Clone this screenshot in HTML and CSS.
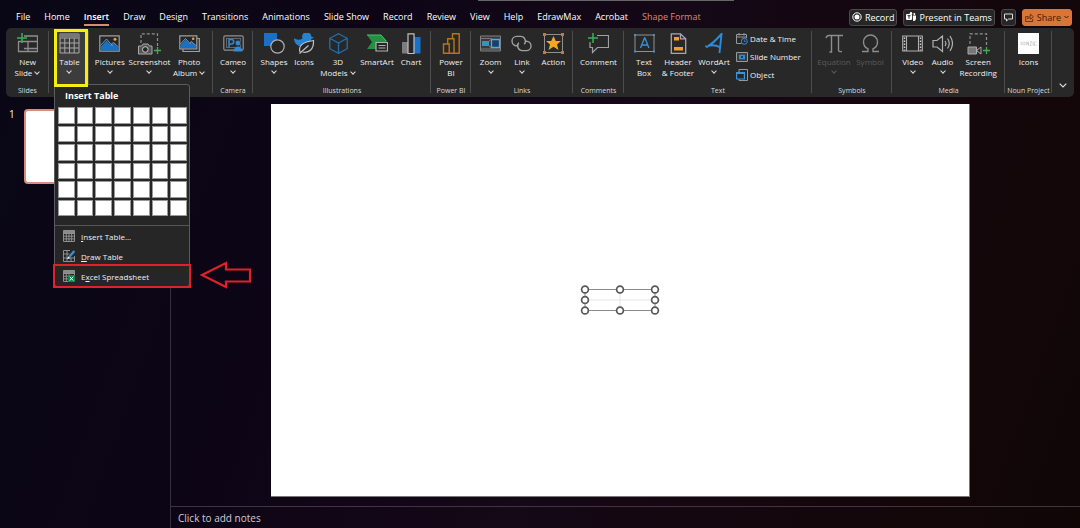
FILE: index.html
```html
<!DOCTYPE html>
<html lang="en">
<head>
  <meta charset="UTF-8">
  <meta name="viewport" content="width=device-width, initial-scale=1.0">
  <title>Presentation - Insert Table</title>
  <link rel="stylesheet" href="styles.css">
</head>
<body>
  <header class="topbar">
    <nav class="tabs">
      <a href="#">File</a>
      <a href="#">Home</a>
      <a href="#" class="active">Insert</a>
      <a href="#">Draw</a>
      <a href="#">Design</a>
      <a href="#">Transitions</a>
      <a href="#">Animations</a>
      <a href="#">Slide Show</a>
      <a href="#">Record</a>
      <a href="#">Review</a>
      <a href="#">View</a>
      <a href="#">Help</a>
      <a href="#">EdrawMax</a>
      <a href="#">Acrobat</a>
      <a href="#" class="context">Shape Format</a>
    </nav>
    <div class="actions">
      <button type="button">
        <svg width="10" height="10" viewBox="0 0 10 10"><circle cx="5" cy="5" r="4.2" fill="none" stroke="#fff"/><circle cx="5" cy="5" r="2.5" fill="#fff"/></svg>
        Record
      </button>
      <button type="button">
        <svg width="10" height="10" viewBox="0 0 10 10"><rect x="0" y="2" width="6" height="6" rx="1" fill="#fff"/><path d="M1.5 3.7h3M3 3.7v3" stroke="#262626" fill="none"/><circle cx="5" cy="1.2" r="1.2" fill="#fff"/><circle cx="8.3" cy="2" r="1" fill="#fff"/><path d="M6.8 3.6H10V7a2.4 2.4 0 0 1-3 1.8z" fill="#fff"/></svg>
        Present in Teams
      </button>
      <button type="button" aria-label="Comments">
        <svg width="9" height="9" viewBox="0 0 9 9"><path d="M.5 1h8v5H4.6L2.5 8V6h-2z" fill="none" stroke="#ddd"/></svg>
      </button>
      <button type="button" class="share">
        <svg width="9" height="9" viewBox="0 0 9 9"><path d="M3 3.500H.7v5h7V6M2.600 6c.2-2 1.400-2.900 3-2.900V1.200l2.800 2.600-2.800 2.400V4.700C4.200 4.700 3.300 5 2.600 6z" fill="none" stroke="#5a2408" stroke-width=".8"/></svg>
        Share
        <svg width="5" height="4" viewBox="0 0 5 4"><path d="M.5 1l2 2 2-2" fill="none" stroke="#401a06"/></svg>
      </button>
    </div>
  </header>

  <section class="ribbon">
    <div class="group">
      <div class="tools">
        <button type="button" class="tool">
          <svg viewBox="0 0 21 21"><path d="M7 3h13.500v15.500H1.500V8M1.500 8.500H20M11 8.500V18.500M7 15.500H20" fill="none" stroke="#8d8d8d" stroke-width="1.300"/><path d="M5 0v10M0 5h10" stroke="#3fae55" stroke-width="1.500"/></svg>
          <span>New<br>Slide <i class="chev"></i></span>
        </button>
      </div>
      <div class="name">Slides</div>
    </div>

    <div class="group tables">
      <div class="tools">
        <button type="button" class="tool open">
          <svg viewBox="0 0 21 21"><path d="M1 1h19v19H1zM1 5h19M1 10h19M1 15h19M5.800 5v15M10.500 5v15M15.200 5v15" fill="none" stroke="#a8a8a8"/><path d="M1 1h19v4H1z" fill="#777"/></svg>
          <span>Table<i class="chev"></i></span>
        </button>
      </div>
      <div class="menu">
        <h2>Insert Table</h2>
        <div class="cells" id="cells"></div>
        <button type="button" class="item">
          <svg viewBox="0 0 12 12"><path d="M.5.5h11v11H.5zM.5 3.500h11M.5 6.200h11M.5 8.900h11M3.300 3v8.500M6 3v8.500M8.700 3v8.500" fill="none" stroke="#9a9a9a" stroke-width=".9"/><path d="M.5.5h11v2.500H.5z" fill="#8a8a8a"/></svg>
          <span><u>I</u>nsert Table...</span>
        </button>
        <button type="button" class="item">
          <svg viewBox="0 0 12 12"><path d="M7 .5H.5v11h11V6M.5 4h6M.5 8h11M4 .5v11M8 8v3.500" fill="none" stroke="#9a9a9a" stroke-width=".9"/><path d="M11.300 1L6 7.300" stroke="#3f8fd0" stroke-width="2.200"/><path d="M5.600 6.600L4 9.300l2.800-1z" fill="#fff"/></svg>
          <span><u>D</u>raw Table</span>
        </button>
        <button type="button" class="item marked">
          <svg viewBox="0 0 12 12"><path d="M.5.5h11v11H.5zM.5 3.500h11M.5 6.200h11M.5 8.900h11M3.300 3v8.500M6 3v8.500" fill="none" stroke="#9a9a9a" stroke-width=".9"/><path d="M.5.5h11v2.500H.5z" fill="#8a8a8a"/><path d="M5 5h7v7H5z" fill="#16874a"/><path d="M6.800 6.700l3.400 3.800M10.200 6.700l-3.400 3.800" stroke="#fff"/></svg>
          <span>E<u>x</u>cel Spreadsheet</span>
        </button>
        <svg class="arrow" viewBox="0 0 52 28"><path d="M2 14L26 2V8.500H50V20.500H26V26z" fill="none" stroke="#e0202a" stroke-width="2.200"/></svg>
      </div>
    </div>

    <div class="group images">
      <div class="tools">
        <button type="button" class="tool">
          <svg viewBox="0 0 21 21"><path d="M.8 2.800h19.400v15.400H.8z" fill="#262626" stroke="#a0a0a0" stroke-width="1.200"/><path d="M1.500 14l6-6.500 4.500 4.500 2.500-2 5 5v2.500h-18z" fill="#1a70c4"/><path d="M1.500 12.500L7.500 6l6 7M12 11.500l2.500-2 5 4.500" fill="none" stroke="#8cc4f0" stroke-width=".7"/><circle cx="16" cy="6.300" r="1.500" fill="#e8a33a"/></svg>
          <span>Pictures<i class="chev"></i></span>
        </button>
        <button type="button" class="tool">
          <svg viewBox="0 0 21 21" overflow="visible"><path d="M2 10V.8h16.500V13" fill="none" stroke="#909090" stroke-width="1.200" stroke-dasharray="3 2"/><path d="M-.5 13h3l1.500-2h5l1.500 2H13v8H-.5z" fill="#555" stroke="#aaa"/><circle cx="6.300" cy="16.500" r="2.800" fill="#262626" stroke="#ccc"/><path d="M18.500 14v7M15 17.500h7" stroke="#3fae55" stroke-width="1.300"/></svg>
          <span>Screenshot<i class="chev"></i></span>
        </button>
        <button type="button" class="tool">
          <svg viewBox="0 0 21 21"><path d="M18 5.500h2.300v13H4V16" fill="none" stroke="#a0a0a0" stroke-width="1.200"/><path d="M.8 2.800h17v13h-17z" fill="#262626" stroke="#a0a0a0" stroke-width="1.200"/><path d="M1.500 12l5-5.500 4 4 2-1.800 4.600 4.300v2.200H1.500z" fill="#1a70c4"/><path d="M1.500 11l5-5.500 5 5.500M11 9.500l1.500-1 4.500 4" fill="none" stroke="#8cc4f0" stroke-width=".7"/><circle cx="14.200" cy="5.800" r="1.300" fill="#e8a33a"/></svg>
          <span>Photo<br>Album <i class="chev"></i></span>
        </button>
      </div>
      <div class="name"></div>
    </div>

    <div class="group">
      <div class="tools">
        <button type="button" class="tool">
          <svg viewBox="0 0 21 21"><rect x=".8" y="2.800" width="19.400" height="14.400" rx="1.500" fill="none" stroke="#909090" stroke-width="1.200"/><rect x="3.500" y="5.500" width="14" height="9" fill="none" stroke="#777" stroke-width=".8"/><path d="M6 14V6.500h2.500a2.200 2.200 0 0 1 0 4.400H6" fill="none" stroke="#3388cc" stroke-width="1.500"/><circle cx="15" cy="10" r="2.800" fill="#2f8ad8" stroke="#262626" stroke-width=".6"/><path d="M10.500 18.500a4.500 5 0 0 1 9 0z" fill="#2f8ad8"/></svg>
          <span>Cameo<i class="chev"></i></span>
        </button>
      </div>
      <div class="name">Camera</div>
    </div>

    <div class="group illustrations">
      <div class="tools">
        <button type="button" class="tool">
          <svg viewBox="0 0 21 21"><path d="M0 0h13v13H0z" fill="#1a70c4"/><circle cx="13.500" cy="13.500" r="6.700" fill="#262626" stroke="#b0b0b0" stroke-width="1.200"/></svg>
          <span>Shapes<i class="chev"></i></span>
        </button>
        <button type="button" class="tool">
          <svg viewBox="0 0 21 21"><path d="M0 5c2.500 2 5.500 2.300 8.500.5A4.600 4.600 0 1 1 17.300 3.500l2.700 1.300-2.700 1.200c-.3 1.500-1 2.500-2 3.500L8 13.500C3 13 0 10 0 5z" fill="#2583d2"/><path d="M6 19c-2-6.500 3-10 13.500-11.500.5 8.500-4.500 13-11 11.500M5.500 20.500L14.500 12.500" fill="#262626" stroke="#c0c0c0" stroke-width="1.200"/></svg>
          <span>Icons</span>
        </button>
        <button type="button" class="tool">
          <svg viewBox="0 0 21 21"><path d="M10.500.7l8.700 4.600v10.400l-8.700 4.600-8.700-4.600V5.300zM1.800 5.300l8.700 4.700 8.700-4.700M10.500 10v10.300" fill="none" stroke="#236eac" stroke-width="1.300"/></svg>
          <span>3D<br>Models <i class="chev"></i></span>
        </button>
        <button type="button" class="tool">
          <svg viewBox="0 0 21 21"><path d="M0 2h14l6 6-3 8H0l5-7z" fill="#239144"/><path d="M0 2h14l5 6" fill="none" stroke="#4cc06a"/><path d="M9 9.500h11.500v8.500H9z" fill="#262626" stroke="#b0b0b0" stroke-width="1.200"/><path d="M11.500 12.500h7M11.500 15h7" stroke="#b0b0b0"/></svg>
          <span>SmartArt</span>
        </button>
        <button type="button" class="tool">
          <svg viewBox="0 0 21 21"><path d="M1 9h6v11.500H1z" fill="#7d7d7d"/><path d="M13 4h6.500v16.500H13z" fill="#1a70c4"/><path d="M7 .8h6v19.700H7z" fill="#262626" stroke="#c0c0c0" stroke-width="1.200"/></svg>
          <span>Chart</span>
        </button>
      </div>
      <div class="name">Illustrations</div>
    </div>

    <div class="group">
      <div class="tools">
        <button type="button" class="tool">
          <svg viewBox="0 0 21 21"><path d="M11.500 5V.8h6.700v19.500H2.500V11h4.200M6.700 11V5.700H13v14.600M2.500 11h5.700v9.300" fill="none" stroke="#b87518" stroke-width="1.400"/></svg>
          <span>Power<br>BI</span>
        </button>
      </div>
      <div class="name">Power BI</div>
    </div>

    <div class="group links">
      <div class="tools">
        <button type="button" class="tool">
          <svg viewBox="0 0 21 21"><path d="M.5 3h20v15H.5z" fill="#3a3a3a" stroke="#808080"/><path d="M2 8h7v5H2z" fill="#3f8fb8"/><path d="M.5 5.500h11M9 8l3-2M9 13l3 2M.5 16h20" stroke="#888" stroke-width=".8"/><path d="M11.500 6.500h8v8h-8z" fill="#17406a" stroke="#5aa9d8" stroke-width="1.300"/></svg>
          <span>Zoom<i class="chev"></i></span>
        </button>
        <button type="button" class="tool">
          <svg viewBox="0 0 21 21"><path d="M7 12.800H5.700a4.700 4.700 0 0 1 0-9.400h4a4.700 4.700 0 0 1 3.500 7.800M14 8.200h1.300a4.700 4.700 0 0 1 0 9.400h-4a4.700 4.700 0 0 1-3.500-7.800" fill="none" stroke="#a0a0a0" stroke-width="1.400"/></svg>
          <span>Link<i class="chev"></i></span>
        </button>
        <button type="button" class="tool">
          <svg viewBox="0 0 21 21"><path d="M1.500 1.500h18v18h-18z" fill="none" stroke="#909090"/><path d="M10.500 3l2.300 5h5.200l-4 3.600 1.500 5.400-5-3.200-5 3.200L7 11.600 3 8h5.200z" fill="#f5a623"/><g fill="#c9773c"><path d="M0 0h3v3H0zM18 0h3v3h-3zM0 18h3v3H0zM18 18h3v3h-3z"/></g></svg>
          <span>Action</span>
        </button>
      </div>
      <div class="name">Links</div>
    </div>

    <div class="group">
      <div class="tools">
        <button type="button" class="tool">
          <svg viewBox="0 0 21 21"><path d="M9 2.500h11.500v12H9.500l-5 5v-5H2V9" fill="none" stroke="#a0a0a0" stroke-width="1.200"/><path d="M5 0v10M0 5h10" stroke="#3fae55" stroke-width="1.500"/></svg>
          <span>Comment</span>
        </button>
      </div>
      <div class="name">Comments</div>
    </div>

    <div class="group text">
      <div class="tools">
        <button type="button" class="tool">
          <svg viewBox="0 0 21 21"><path d="M1 2h19v16.500H1z" fill="none" stroke="#909090"/><path d="M6.500 15l4-10h.4l4 10M8 12h5.500" fill="none" stroke="#3a92dc" stroke-width="1.300"/><path d="M0 1h2v2H0zM19 1h2v2h-2zM0 17.500h2v2H0zM19 17.500h2v2h-2z" fill="#3a92dc"/></svg>
          <span>Text<br>Box</span>
        </button>
        <button type="button" class="tool">
          <svg viewBox="0 0 21 21"><path d="M3.300.8h9.200l5.200 5v14.500H3.300zM12.500.8v5h5.200" fill="none" stroke="#a8a8a8" stroke-width="1.300"/><path d="M6 4h5v3.500H6zM6 14h9v3.500H6z" fill="#f0a030"/></svg>
          <span>Header<br>&amp; Footer</span>
        </button>
        <button type="button" class="tool">
          <svg viewBox="0 0 21 21"><path d="M4 13C8 11 13 6 17.500 1L15.500 20M4 13.500c-1.500.5-2 0-2-1M4 13c4-1.500 8-1 12.500 1.500" fill="none" stroke="#2f8ad8" stroke-width="1.900"/></svg>
          <span>WordArt<i class="chev"></i></span>
        </button>
        <div class="small-tools">
          <button type="button">
            <svg viewBox="0 0 12 12"><path d="M5.500 10.500H.5v-9h10V5M.5 4h10M3 0v2.500M8 0v2.500" fill="none" stroke="#999"/><circle cx="8.300" cy="8.300" r="3" fill="#262626" stroke="#3a92dc"/><path d="M8.300 6.500v2h1.500" fill="none" stroke="#3a92dc" stroke-width=".8"/></svg>
            Date &amp; Time
          </button>
          <button type="button">
            <svg viewBox="0 0 12 12"><path d="M.5 1.500h11v9H.5z" fill="#3a3a3a" stroke="#999"/><path d="M3 3.700h6v4.600H3z" fill="#2f8ad8"/><path d="M5 5h2v2H5z" fill="#173f66"/></svg>
            Slide Number
          </button>
          <button type="button">
            <svg viewBox="0 0 12 12"><path d="M3 3V.5h8.500v11H3V10" fill="none" stroke="#999"/><path d="M.6 3.500h7.800v6.500H.6z" fill="#262626" stroke="#3a92dc" stroke-width="1.200"/><path d="M.6 4.500h7.800" stroke="#3a92dc"/></svg>
            Object
          </button>
        </div>
      </div>
      <div class="name">Text</div>
    </div>

    <div class="group symbols">
      <div class="tools">
        <button type="button" class="tool" disabled>
          <svg viewBox="0 0 21 21"><path d="M2 5c.5-2 1.500-2.500 3-2.500h14M7.500 2.500V19H5.500M14.500 2.500V17q0 2 3.500 1.500" fill="none" stroke="#8d8d8d" stroke-width="1.400"/></svg>
          <span>Equation<i class="chev"></i></span>
        </button>
        <button type="button" class="tool" disabled>
          <svg viewBox="0 0 21 21"><path d="M2 18.500h6v-2.700C5 14.500 3.500 12 3.500 9a7 7 0 0 1 14 0c0 3-1.500 5.500-4.500 6.800v2.700h6" fill="none" stroke="#8d8d8d" stroke-width="1.400"/></svg>
          <span>Symbol</span>
        </button>
      </div>
      <div class="name">Symbols</div>
    </div>

    <div class="group media">
      <div class="tools">
        <button type="button" class="tool">
          <svg viewBox="0 0 21 21"><path d="M.7 3h19.600v15H.7zM4.500 3v15M16.500 3v15" fill="none" stroke="#b0b0b0" stroke-width="1.100"/><path d="M2.500 4.500v13M18.500 4.500v13" stroke="#d0d0d0" stroke-width="1.500" stroke-dasharray="1.500 1.500"/></svg>
          <span>Video<i class="chev"></i></span>
        </button>
        <button type="button" class="tool">
          <svg viewBox="0 0 21 21"><path d="M1 7.500h4L10.500 3v15.500L5 14H1zM13 8q1.800 2.500 0 5M15.500 5.500q3.500 5 0 10M18 3q5 7.500 0 15" fill="none" stroke="#b0b0b0" stroke-width="1.200"/></svg>
          <span>Audio<i class="chev"></i></span>
        </button>
        <button type="button" class="tool">
          <svg viewBox="0 0 21 21" overflow="visible"><path d="M2 11V.8h16.500V13" fill="none" stroke="#909090" stroke-width="1.200" stroke-dasharray="3 2"/><path d="M0 14h8.500v7H0z" fill="#777" stroke="#aaa"/><path d="M9 17l4-3v7l-4-3z" fill="none" stroke="#aaa"/><path d="M18.500 14v7M15 17.500h7" stroke="#3fae55" stroke-width="1.300"/></svg>
          <span>Screen<br>Recording</span>
        </button>
      </div>
      <div class="name">Media</div>
    </div>

    <div class="group">
      <div class="tools">
        <button type="button" class="tool noun">
          <svg viewBox="0 0 23 23"><path d="M0 0h23v23H0z" fill="#fff"/><path d="M3.500 9.500v4M5 11.500a1.500 1.500 0 1 0 3 0 1.500 1.500 0 1 0-3 0M9.500 13.500v-4l2 4v-4M13 9.500h2l-2 4h2M16.500 9.500v4h1.500v-4M19 9.500h1.500M19 13.500h1.500" fill="none" stroke="#aaa" stroke-width=".6"/></svg>
          <span>Icons</span>
        </button>
      </div>
      <div class="name">Noun Project</div>
    </div>

    <button type="button" class="collapse" aria-label="Collapse the ribbon">
      <svg width="8" height="5" viewBox="0 0 8 5"><path d="M.7.7L4 4 7.300.7" fill="none" stroke="#ddd" stroke-width="1.200"/></svg>
    </button>
  </section>

  <main class="workspace">
    <aside class="thumbs">
      <span>1</span>
      <div class="thumb"></div>
    </aside>
    <div class="editor">
      <div class="stage">
        <div class="slide">
          <svg width="80" height="32" viewBox="0 0 80 32">
            <path d="M5 5.500h70v21H5z" fill="none" stroke="#8a8a8a"/>
            <path d="M5 16h70M40 5v22" stroke="#dedede" stroke-width=".8"/>
            <g fill="#fff" stroke="#585858" stroke-width="1.700">
              <circle cx="5" cy="5.500" r="3.400"/><circle cx="40" cy="5.500" r="3.400"/><circle cx="75" cy="5.500" r="3.400"/>
              <circle cx="5" cy="16" r="3.400"/><circle cx="75" cy="16" r="3.400"/>
              <circle cx="5" cy="26.500" r="3.400"/><circle cx="40" cy="26.500" r="3.400"/><circle cx="75" cy="26.500" r="3.400"/>
            </g>
          </svg>
        </div>
      </div>
      <div class="notes">Click to add notes</div>
    </div>
  </main>

  <script>
    // 7 x 6 table size picker
    const cells = document.getElementById('cells');
    for (let i = 0; i < 42; i++) {
      const cell = document.createElement('button');
      cell.type = 'button';
      cell.setAttribute('aria-label', `${i % 7 + 1}x${Math.floor(i / 7) + 1} Table`);
      cells.appendChild(cell);
    }
  </script>
</body>
</html>
```
FILE: styles.css
```css
* {
  box-sizing: border-box;
}

body {
  font-family: "Open Sans", "Noto Sans", sans-serif;
  font-size: 8px;
  line-height: 11px;
  margin: 0;
  min-height: 100vh;
  display: flex;
  flex-direction: column;
  color: #f0f0f0;
  background: linear-gradient(110deg, #090716 0%, #0d0516 30%, #150817 55%, #14070d 75%, #110606 100%);
}

button {
  font: inherit;
  color: inherit;
  background: none;
  border: none;
  padding: 0;
  cursor: pointer;
}

/* tabs */

.topbar {
  display: flex;
  justify-content: space-between;
  align-items: center;
  height: 28px;
  padding: 6px 8px 0 16px;
  background: linear-gradient(#666, #666) 58% 0 / 256px 1px no-repeat;
}

.tabs {
  display: flex;
  gap: 14px;
  font-size: 9px;
  line-height: 14px;
}

.tabs a {
  color: #fff;
  text-decoration: none;
  white-space: nowrap;
  padding: 2px 0 0;
  border-bottom: 2px solid transparent;
}

.tabs .active {
  font-weight: 600;
  border-bottom-color: #d98b70;
}

.tabs .context {
  color: #d98b70;
}

.actions {
  display: flex;
  gap: 6px;
  font-size: 9px;
}

.actions button {
  display: flex;
  align-items: center;
  gap: 3px;
  height: 17px;
  padding: 0 2px;
  color: #fff;
  background: #262626;
  border: 1px solid #4a4a4a;
  border-radius: 3px;
  white-space: nowrap;
}

.actions .share {
  color: #401a06;
  background: #d87539;
  border-color: #d87539;
}

/* ribbon */

.ribbon {
  display: grid;
  grid-template-columns: 43fr 40fr 124fr 40fr 178fr 40fr 102fr 51fr 188fr 80fr 113fr 47fr 22fr;
  height: 69px;
  margin: 0 6px;
  background: #282828;
  border-radius: 5px;
}

.group {
  min-width: 0;
  display: flex;
  flex-direction: column;
  justify-content: space-between;
  padding: 2px 0 1px;
  background: linear-gradient(#4c4c4c, #4c4c4c) 100% 3px / 1px 62px no-repeat;
}

.tools {
  display: grid;
  grid-auto-flow: column;
  grid-auto-columns: minmax(0, 1fr);
}

.images .tools {
  padding: 0 4px 0 1px;
}

.links .tools,
.symbols .tools {
  padding: 0 4px;
}

.illustrations .tools {
  grid-template-columns: 30fr 30fr 38fr 40fr 28fr;
  padding: 0 6px;
}

.text .tools {
  grid-template-columns: 32fr 36fr 36fr 76fr;
  padding: 0 4px;
}

.media .tools {
  grid-template-columns: 30fr 30fr 42fr;
  padding: 0 6px;
}

.tool {
  display: flex;
  flex-direction: column;
  align-items: center;
  gap: 2px;
  min-width: 0;
  height: 52px;
  padding-top: 3px;
  white-space: nowrap;
}

.tool svg {
  flex: none;
  width: 21px;
  height: 21px;
}

.tool.noun svg {
  width: 23px;
}

.tool .chev {
  display: inline-block;
  width: 4px;
  height: 4px;
  margin: 0 1px 2px;
  border: solid #ddd;
  border-width: 0 1px 1px 0;
  transform: rotate(45deg);
}

.tool span > .chev:only-child {
  display: block;
  margin: 2px auto 0;
}

.tool:disabled {
  color: #5a5a5a;
}

.tool:disabled .chev {
  border-color: #5a5a5a;
}

.name {
  text-align: center;
  font-size: 7px;
  white-space: nowrap;
  color: #dcdcdc;
}

.small-tools {
  display: flex;
  flex-direction: column;
  height: 52px;
  padding-left: 4px;
}

.small-tools button {
  display: flex;
  align-items: center;
  gap: 2px;
  flex: 0 0 18px;
  line-height: 10px;
  white-space: nowrap;
}

.small-tools svg {
  width: 12px;
  height: 12px;
}

.collapse {
  align-self: end;
  padding-bottom: 7px;
}

/* table button and its menu */

.tables {
  position: relative;
}

.tables .tools {
  margin: -1px 1px 0 5px;
}

.tables .open {
  height: 58px;
  padding: 1px 3px 0 0;
  background: #3c3c3c;
  border: 3px solid #f5ee10;
  position: relative;
  z-index: 2;
}

.menu {
  position: absolute;
  z-index: 1;
  top: 56px;
  left: 5px;
  width: 136px;
  background: #262626;
  border: 1px solid #5c5c5c;
  border-radius: 3px;
}

.menu h2 {
  margin: 0;
  padding: 4px 10px;
  font-size: 9px;
  line-height: 14px;
  color: #fff;
}

.cells {
  display: grid;
  grid-template: repeat(6, 1fr) / repeat(7, 1fr);
  gap: 2px;
  height: 119px;
  padding: 0 2px 9px 3px;
  border-bottom: 1px solid #555;
}

.cells button {
  background: #fff;
  border: 1px solid #999;
}

.item {
  display: flex;
  align-items: center;
  gap: 6px;
  width: 100%;
  height: 20px;
  padding-left: 8px;
  white-space: nowrap;
}

.item svg {
  width: 12px;
  height: 12px;
}

.item u {
  text-underline-offset: 1px;
}

.marked {
  outline: 2px solid #e0202a;
}

.arrow {
  position: absolute;
  left: 145px;
  bottom: -3px;
  width: 52px;
  height: 28px;
}

/* workspace */

.workspace {
  flex: 1;
  display: flex;
}

.thumbs {
  width: 171px;
  display: flex;
  align-items: flex-start;
  gap: 9px;
  padding: 12px 13px 0 9px;
  font-size: 10px;
  border-right: 1px solid #37313f;
}

.thumb {
  flex: 1;
  aspect-ratio: 16 / 9;
  background: #fff;
  border: 2px solid #d98b7c;
  border-radius: 4px;
}

.editor {
  flex: 1;
  display: flex;
  flex-direction: column;
}

.stage {
  flex: 1;
  display: flex;
  justify-content: center;
  padding: 7px 10px 9px 0;
}

.slide {
  aspect-ratio: 16 / 9;
  display: flex;
  justify-content: center;
  align-items: center;
  background: #fff;
  border: solid #777;
  border-width: 0 1px 1px 0;
}

.notes {
  height: 22px;
  padding: 0 7px;
  font-size: 10px;
  line-height: 22px;
  color: #d0cdd2;
  border-top: 1px solid #40343e;
}
```
